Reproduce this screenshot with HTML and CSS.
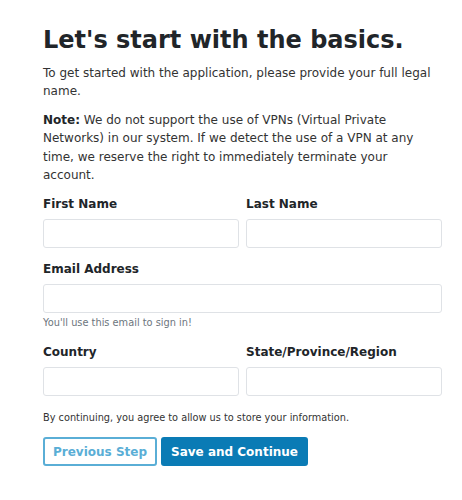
FILE: index.html
```html
<!DOCTYPE html>
<html>
<head>
<meta charset="utf-8">
<link rel="stylesheet" href="styles.css">
</head>
<body>
<main class="page">
  <h1 class="title">Let's start with the basics.</h1>
  <p class="lead">To get started with the application, please provide your full legal name.</p>
  <p class="note"><strong>Note:</strong> We do not support the use of VPNs (Virtual Private Networks) in our system. If we detect the use of a VPN at any time, we reserve the right to immediately terminate your account.</p>
  <form class="form">
    <div class="row">
      <div class="field">
        <label class="label">First Name</label>
        <input class="input" type="text">
      </div>
      <div class="field">
        <label class="label">Last Name</label>
        <input class="input" type="text">
      </div>
    </div>
    <div class="field">
      <label class="label">Email Address</label>
      <input class="input" type="text">
      <small class="help">You'll use this email to sign in!</small>
    </div>
    <div class="row">
      <div class="field">
        <label class="label">Country</label>
        <input class="input" type="text">
      </div>
      <div class="field">
        <label class="label">State/Province/Region</label>
        <input class="input" type="text">
      </div>
    </div>
    <p class="consent">By continuing, you agree to allow us to store your information.</p>
    <div class="actions">
      <button type="button" class="btn btn-outline">Previous Step</button>
      <button type="button" class="btn btn-primary">Save and Continue</button>
    </div>
  </form>
</main>
</body>
</html>
```
FILE: styles.css
```css
html, body { margin: 0; padding: 0; background: #fff; }
body { font-family: "DejaVu Sans", Verdana, sans-serif; color: #333; }
.page { width: 399px; padding: 25px 20px 0 43px; }
.title { margin: 0 0 9px; font-size: 24px; line-height: 30px; font-weight: bold; color: #212529; }
.lead { margin: 0 0 11px; font-size: 12px; line-height: 18px; color: #333; }
.note { margin: 0; font-size: 12px; line-height: 18.3px; color: #333; }
.note strong { color: #212529; }
.form { margin-top: 12px; display: flex; flex-direction: column; }
.row { display: flex; gap: 7px; }
.row .field { flex: 1 1 0; min-width: 0; }
.field { display: flex; flex-direction: column; margin-bottom: 13px; }
.label { font-size: 12px; font-weight: bold; color: #212529; line-height: 17px; margin-bottom: 6px; }
.input { box-sizing: border-box; width: 100%; min-width: 0; height: 29px; border: 1px solid #dfe2e6; border-radius: 3px; background: #fff; margin: 0; padding: 0 8px; font: inherit; }
.help { font-size: 9.8px; color: #6c757d; margin-top: 3px; line-height: 14px; margin-bottom: 1px; }
.consent { font-size: 9.75px; color: #333; margin: 2px 0 12px; line-height: 14px; }
.actions { display: flex; gap: 4px; }
.btn { box-sizing: border-box; height: 29px; padding: 0 8px; margin: 0; font-family: "DejaVu Sans", Verdana, sans-serif; font-size: 12px; font-weight: bold; border-radius: 3px; cursor: pointer; }
.btn-outline { background: #fff; color: #5aaed6; border: 2px solid #5aaed6; }
.btn-primary { background: #0a7bb5; color: #fff; border: 2px solid #0a7bb5; }
```
